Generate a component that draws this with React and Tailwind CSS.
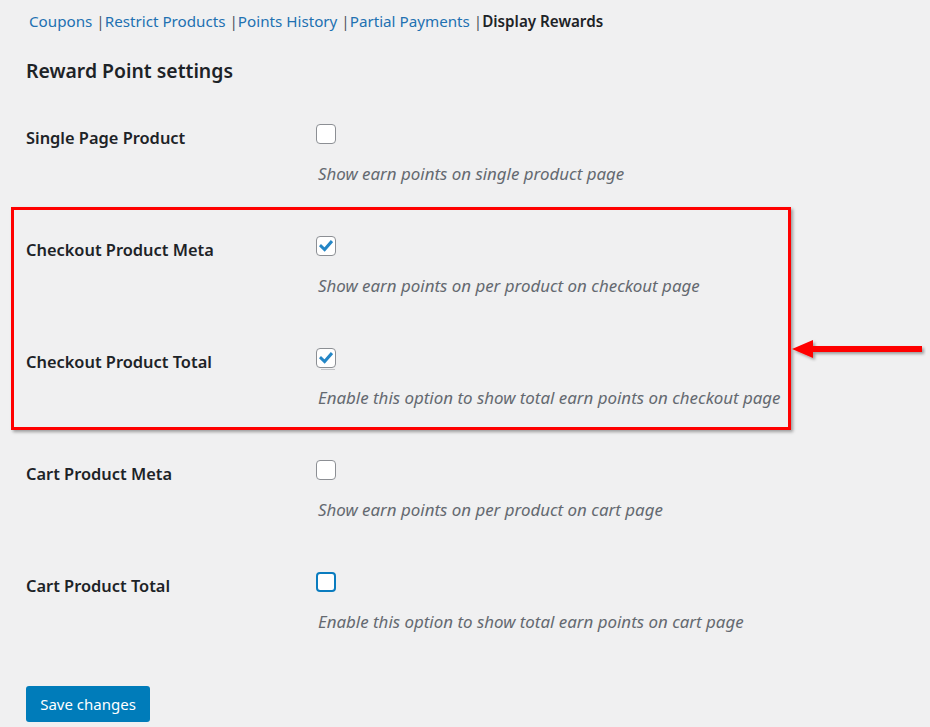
import React from 'react';

const tabs = [
  { label: 'Coupons' },
  { label: 'Restrict Products' },
  { label: 'Points History' },
  { label: 'Partial Payments' },
  { label: 'Display Rewards', current: true },
];

const settings = [
  { label: 'Single Page Product', desc: 'Show earn points on single product page', checked: false },
  { label: 'Checkout Product Meta', desc: 'Show earn points on per product on checkout page', checked: true },
  { label: 'Checkout Product Total', desc: 'Enable this option to show total earn points on checkout page', checked: true, ghost: true },
  { label: 'Cart Product Meta', desc: 'Show earn points on per product on cart page', checked: false },
  { label: 'Cart Product Total', desc: 'Enable this option to show total earn points on cart page', checked: false, focused: true },
];

const Checkbox = ({ checked, focused }) => (
  <div
    className={
      'w-[20px] h-[20px] rounded-[4px] bg-white flex items-center justify-center ' +
      (focused ? 'border-2 border-[#0a7cbf]' : 'border border-[#8c8f94]')
    }
  >
    {checked && (
      <svg width="14" height="14" viewBox="0 0 14 14">
        <path d="M2 7.2 L5.6 10.6 L12 3.2" fill="none" stroke="#2486c6" strokeWidth="3" strokeLinecap="square" />
      </svg>
    )}
  </div>
);

const SettingRow = ({ setting }) => (
  <div className="grid grid-cols-[290px_1fr] h-[112px]">
    <div className="pt-[16px] text-[16.4px] leading-[24px] font-semibold text-[#1d2327]">{setting.label}</div>
    <div className="pt-[14px]">
      <Checkbox checked={setting.checked} focused={setting.focused} />
      {setting.ghost && <div className="ml-[5px] mt-[1px] w-[14px] h-[1px] bg-[#c3c4c7]" />}
      <p className={'pl-[2px] italic text-[16.9px] leading-[24px] text-[#646970] ' + (setting.ghost ? 'mt-[16px]' : 'mt-[18px]')}>
        {setting.desc}
      </p>
    </div>
  </div>
);

export default function App() {
  return (
    <div
      className="relative min-h-[727px] w-[930px] bg-[#f0f0f1] pl-[26px] text-[#1d2327]"
      style={{ fontFamily: '"Noto Sans", "Open Sans", sans-serif' }}
    >
      <nav className="pt-[10px] pl-[3px] text-[15.2px] leading-[22px] flex">
        {tabs.map((t, i) => (
          <span key={t.label} className="whitespace-pre">
            {i > 0 && <span className="text-[#50575e]">{' |'}</span>}
            <span className={t.current ? 'font-semibold text-[#1d2327]' : 'text-[#2271b1]'}>{t.label}</span>
          </span>
        ))}
      </nav>

      <h2 className="mt-[25px] text-[19.4px] leading-[28px] font-semibold text-[#1d2327]">Reward Point settings</h2>

      <div className="relative mt-[25px]">
        {settings.map((s) => (
          <SettingRow key={s.label} setting={s} />
        ))}

        {/* highlight frame around the checkout options */}
        <div className="absolute left-[-15px] top-[97px] w-[780px] h-[223px] border-[3px] border-[#ff0000] shadow-[2px_2px_3px_rgba(0,0,0,0.35)] pointer-events-none" />

        {/* pointer arrow */}
        <svg className="absolute left-[765px] top-[228px]" width="135" height="24" viewBox="0 0 135 24">
          <defs>
            <filter id="arrowShadow" x="-10%" y="-50%" width="120%" height="200%">
              <feDropShadow dx="2" dy="2" stdDeviation="1.5" floodColor="#000" floodOpacity="0.35" />
            </filter>
          </defs>
          <g filter="url(#arrowShadow)">
            <polygon points="1,11 22,2 22,20" fill="#ff0000" />
            <rect x="20" y="8" width="111" height="6" fill="#ff0000" />
          </g>
        </svg>
      </div>

      <button className="mt-[16px] h-[36px] w-[124px] rounded-[3px] bg-[#007cba] text-white text-[15px] leading-[20px]">
        Save changes
      </button>
    </div>
  );
}
